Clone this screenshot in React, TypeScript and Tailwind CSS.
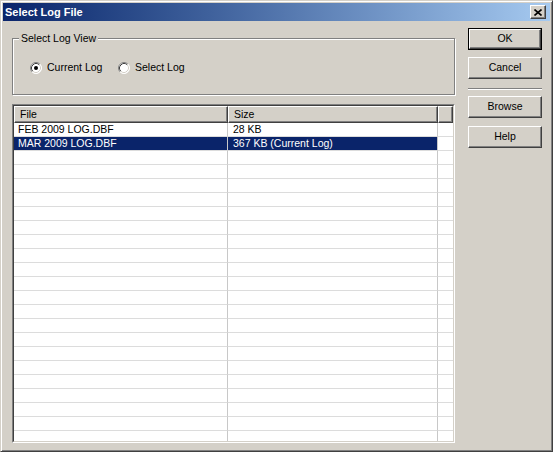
import React from "react";

const files = [
  { name: "FEB 2009 LOG.DBF", size: "28 KB" },
  { name: "MAR 2009 LOG.DBF", size: "367 KB (Current Log)", selected: true },
];

const Radio = ({ checked }: { checked?: boolean }) => (
  <svg width="12" height="12" viewBox="0 0 12 12" className="shrink-0">
    <circle cx="6" cy="6" r="5.5" fill="#fff" />
    <path d="M2.11 9.89A5.5 5.5 0 0 1 9.89 2.11" stroke="#808080" fill="none" />
    <path d="M9.89 2.11A5.5 5.5 0 0 1 2.11 9.89" stroke="#fff" fill="none" />
    <path d="M2.82 9.18A4.5 4.5 0 0 1 9.18 2.82" stroke="#404040" fill="none" />
    <path d="M9.18 2.82A4.5 4.5 0 0 1 2.82 9.18" stroke="#d4d0c8" fill="none" />
    {checked && <circle cx="6" cy="6" r="2" fill="#000" />}
  </svg>
);

const Button = ({ label, isDefault }: { label: string; isDefault?: boolean }) => {
  const face = (
    <div className="flex h-full items-center justify-center border border-t-white border-l-white border-r-[#404040] border-b-[#404040] shadow-[inset_-1px_-1px_0_#808080]">
      {label}
    </div>
  );
  return isDefault ? (
    <div className="h-[22px] border border-black">{face}</div>
  ) : (
    <div className="h-[22px]">{face}</div>
  );
};

const HeaderCell = ({ label, className }: { label?: string; className: string }) => (
  <div
    className={`h-full border border-t-white border-l-white border-r-[#404040] border-b-[#404040] pl-[5px] leading-[14px] shadow-[inset_-1px_-1px_0_#808080] ${className}`}
  >
    {label}
  </div>
);

const App = () => {
  const rows = Array.from({ length: 23 }, (_, i) => files[i]);

  return (
    <div className="flex h-[452px] w-[553px] flex-col border border-t-[#d4d0c8] border-l-[#d4d0c8] border-r-[#404040] border-b-[#404040] bg-[#d4d0c8] p-[2px] font-['Liberation_Sans',Arial,sans-serif] text-[10.5px] text-black shadow-[inset_1px_1px_0_#fff,inset_-1px_-1px_0_#808080]">
      {/* title bar */}
      <div className="flex h-[18px] shrink-0 items-center justify-between bg-linear-to-r from-[#0a246a] to-[#a6caf0] pl-[2px] pr-[4px]">
        <span className="text-[11px] font-bold leading-[13px] text-white">Select Log File</span>
        <div className="flex h-[14px] w-[16px] items-center justify-center border border-t-white border-l-white border-r-[#404040] border-b-[#404040] bg-[#d4d0c8] shadow-[inset_-1px_-1px_0_#808080]">
          <svg width="8" height="7" viewBox="0 0 8 7">
            <path d="M0.5 0.5L7.5 6.5M7.5 0.5L0.5 6.5" stroke="#000" strokeWidth="1.6" />
          </svg>
        </div>
      </div>

      <div className="flex flex-1 pl-[9px] pr-[8px]">
        {/* left column */}
        <div className="flex w-[443px] flex-col">
          <div className="relative mt-[17px] h-[57px] border border-[#808080] shadow-[inset_1px_1px_0_#fff,1px_1px_0_#fff]">
            <span className="absolute -top-[7px] left-[6px] bg-[#d4d0c8] px-[2px] leading-[13px]">
              Select Log View
            </span>
            <div className="flex items-center pl-[17px] pt-[22px] leading-[13px]">
              <div className="flex w-[88px] items-center gap-[5px]">
                <Radio checked />
                <span>Current Log</span>
              </div>
              <div className="flex items-center gap-[5px]">
                <Radio />
                <span>Select Log</span>
              </div>
            </div>
          </div>

          <div className="mt-[9px] h-[339px] border border-t-[#808080] border-l-[#808080] border-r-white border-b-white">
            <div className="flex h-full flex-col overflow-hidden border border-t-[#404040] border-l-[#404040] border-r-[#d4d0c8] border-b-[#d4d0c8] bg-white">
              <div className="flex h-[17px] shrink-0 bg-[#d4d0c8]">
                <HeaderCell label="File" className="w-[214px]" />
                <HeaderCell label="Size" className="w-[210px]" />
                <HeaderCell className="flex-1" />
              </div>
              {rows.map((row, i) => (
                <div key={i} className="flex h-[14px] shrink-0 leading-[13px]">
                  <div
                    className={`w-[214px] border-r border-b border-r-[#c8c8c8] border-b-[#dcdcdc] pl-[4px] ${
                      row?.selected ? "bg-[#0a246a] text-white" : ""
                    }`}
                  >
                    {row?.name}
                  </div>
                  <div
                    className={`w-[210px] border-r border-b border-r-[#c8c8c8] border-b-[#dcdcdc] pl-[5px] ${
                      row?.selected ? "bg-[#0a246a] text-white" : ""
                    }`}
                  >
                    {row?.size}
                  </div>
                  <div className="flex-1 border-b border-b-[#dcdcdc]" />
                </div>
              ))}
            </div>
          </div>
        </div>

        {/* right column */}
        <div className="ml-[13px] flex w-[74px] flex-col pt-[7px]">
          <Button label="OK" isDefault />
          <div className="mt-[7px]">
            <Button label="Cancel" />
          </div>
          <div className="mt-[9px] h-[2px] border-t border-b border-t-[#808080] border-b-white" />
          <div className="mt-[6px]">
            <Button label="Browse" />
          </div>
          <div className="mt-[8px]">
            <Button label="Help" />
          </div>
        </div>
      </div>
    </div>
  );
};

export default App;
